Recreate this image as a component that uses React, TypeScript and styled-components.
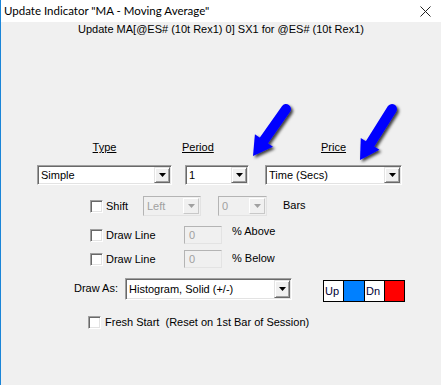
import React from 'react';
import styled, { createGlobalStyle } from 'styled-components';

const GlobalStyle = createGlobalStyle`
  html, body {
    margin: 0;
    padding: 0;
    background: #f0f0f0;
  }
  body {
    font-family: 'Liberation Sans', Arial, sans-serif;
  }
`;

const Window = styled.div`
  position: relative;
  width: 441px;
  height: 385px;
  box-sizing: border-box;
  border-left: 1px solid #1a85d8;
  background: #f0f0f0;
  display: flex;
  flex-direction: column;
  font-family: 'Liberation Sans', Arial, sans-serif;
  font-size: 11px;
  color: #000;
  overflow: hidden;
`;

const TitleBar = styled.div`
  flex: none;
  height: 22px;
  background: #fff;
  display: flex;
  align-items: center;
  justify-content: space-between;
  padding: 0 10px 0 3px;
`;

const Title = styled.span`
  font-family: Lato, 'Noto Sans', sans-serif;
  font-size: 11.5px;
  line-height: 16px;
  margin-top: -1px;
`;

const Body = styled.div`
  flex: 1;
  display: flex;
  flex-direction: column;
`;

const Subtitle = styled.div`
  margin-top: 1px;
  text-align: center;
  line-height: 13px;
`;

const FieldRow = styled.div`
  display: flex;
  align-items: flex-start;
  margin: 105px 0 0 36px;
`;

const Field = styled.div<{ $w: number; $ml?: number }>`
  width: ${(p) => p.$w}px;
  margin-left: ${(p) => p.$ml ?? 0}px;
  display: flex;
  flex-direction: column;
  gap: 11px;
`;

const FieldLabel = styled.span<{ $align?: string; $dx?: number }>`
  align-self: ${(p) => p.$align ?? 'center'};
  margin-left: ${(p) => p.$dx ?? 0}px;
  line-height: 13px;
  text-decoration: underline;
`;

const ComboBox = styled.div<{ $w: number; $h: number; $ml: number; $disabled?: boolean }>`
  width: ${(p) => p.$w}px;
  height: ${(p) => p.$h}px;
  margin-left: ${(p) => p.$ml}px;
  flex: none;
  box-sizing: border-box;
  display: flex;
  align-items: stretch;
  padding: 1px;
  background: ${(p) => (p.$disabled ? '#f0f0f0' : '#fff')};
  border: 1px solid;
  border-color: ${(p) =>
    p.$disabled ? '#b4b4b4 #e3e3e3 #e3e3e3 #b4b4b4' : '#a0a0a0 #fff #fff #a0a0a0'};
  box-shadow: ${(p) =>
    p.$disabled ? 'none' : 'inset 1px 1px 0 #696969, inset -1px -1px 0 #e3e3e3'};
`;

const ComboText = styled.span<{ $disabled?: boolean }>`
  flex: 1;
  display: flex;
  align-items: center;
  padding-left: 2px;
  white-space: nowrap;
  overflow: hidden;
  color: ${(p) => (p.$disabled ? '#a0a0a0' : '#000')};
`;

const DropButton = styled.span<{ $disabled?: boolean }>`
  width: 16px;
  flex: none;
  box-sizing: border-box;
  display: flex;
  align-items: center;
  justify-content: center;
  background: #f0f0f0;
  border: 1px solid;
  border-color: ${(p) =>
    p.$disabled ? '#fff #c8c8c8 #c8c8c8 #fff' : '#e3e3e3 #696969 #696969 #e3e3e3'};
  box-shadow: ${(p) =>
    p.$disabled ? 'none' : 'inset 1px 1px 0 #fff, inset -1px -1px 0 #a0a0a0'};
`;

const OptionRow = styled.div<{ $top: number; $left: number; $h: number; $align?: string }>`
  display: flex;
  align-items: ${(p) => p.$align ?? 'center'};
  height: ${(p) => p.$h}px;
  margin: ${(p) => p.$top}px 0 0 ${(p) => p.$left}px;
`;

const CheckBox = styled.span`
  width: 13px;
  height: 13px;
  flex: none;
  box-sizing: border-box;
  background: #fff;
  border: 1px solid;
  border-color: #a0a0a0 #fff #fff #a0a0a0;
  box-shadow: inset 1px 1px 0 #696969, inset -1px -1px 0 #e3e3e3;
`;

const OptionLabel = styled.span<{ $w?: number; $ml?: number; $dy?: number }>`
  width: ${(p) => (p.$w ? `${p.$w}px` : 'auto')};
  flex: none;
  margin-left: ${(p) => p.$ml ?? 3}px;
  margin-top: ${(p) => p.$dy ?? 0}px;
  line-height: 13px;
  white-space: pre;
`;

const NumberBox = styled.span`
  width: 38px;
  height: 18px;
  flex: none;
  box-sizing: border-box;
  display: flex;
  align-items: center;
  padding-left: 4px;
  background: #f0f0f0;
  border: 1px solid;
  border-color: #b4b4b4 #e3e3e3 #e3e3e3 #b4b4b4;
  color: #a0a0a0;
`;

const ColorKey = styled.div`
  display: flex;
  height: 22px;
  box-sizing: border-box;
  margin: 2px 0 0 31px;
  border: 1px solid #000;
`;

const KeyCell = styled.span<{ $bg: string; $w: number }>`
  width: ${(p) => p.$w}px;
  background: ${(p) => p.$bg};
  color: #000033;
  line-height: 20px;
  padding-left: 1px;
  box-sizing: border-box;
  & + & {
    border-left: 1px solid #000;
  }
`;

const Overlay = styled.svg`
  position: absolute;
  left: -1px;
  top: 0;
  pointer-events: none;
`;

type ComboProps = {
  width: number;
  height?: number;
  offset?: number;
  value: string;
  disabled?: boolean;
};

const Combo: React.FC<ComboProps> = ({ width, height = 20, offset = 0, value, disabled }) => (
  <ComboBox $w={width} $h={height} $ml={offset} $disabled={disabled}>
    <ComboText $disabled={disabled}>{value}</ComboText>
    <DropButton $disabled={disabled}>
      <svg width="7" height="4" viewBox="0 0 7 4">
        <polygon points="0,0 7,0 3.5,4" fill={disabled ? '#a0a0a0' : '#000'} />
      </svg>
    </DropButton>
  </ComboBox>
);

const Arrow: React.FC<{ from: [number, number]; to: [number, number] }> = ({ from, to }) => {
  const dx = to[0] - from[0];
  const dy = to[1] - from[1];
  const len = Math.hypot(dx, dy);
  const ux = dx / len;
  const uy = dy / len;
  const bx = to[0] - ux * 19;
  const by = to[1] - uy * 19;
  const nx = -uy * 11;
  const ny = ux * 11;
  return (
    <g filter="url(#arrowShadow)">
      <line
        x1={from[0]}
        y1={from[1]}
        x2={bx + ux * 3}
        y2={by + uy * 3}
        stroke="#0000ff"
        strokeWidth={10}
        strokeLinecap="round"
      />
      <polygon
        points={`${to[0]},${to[1]} ${bx + nx},${by + ny} ${bx - nx},${by - ny}`}
        fill="#0000ff"
      />
    </g>
  );
};

export default function App() {
  return (
    <>
      <GlobalStyle />
      <Window>
        <TitleBar>
          <Title>Update Indicator "MA - Moving Average"</Title>
          <svg width="11" height="11" viewBox="0 0 11 11">
            <path d="M0.5 0.5 L10.5 10.5 M10.5 0.5 L0.5 10.5" stroke="#222" strokeWidth="1" />
          </svg>
        </TitleBar>
        <Body>
          <Subtitle>Update MA[@ES# (10t Rex1) 0] SX1 for @ES# (10t Rex1)</Subtitle>

          <FieldRow>
            <Field $w={135}>
              <FieldLabel>Type</FieldLabel>
              <Combo width={135} value="Simple" />
            </Field>
            <Field $w={64} $ml={13}>
              <FieldLabel $align="flex-start" $dx={-3}>
                Period
              </FieldLabel>
              <Combo width={64} value="1" />
            </Field>
            <Field $w={137} $ml={16}>
              <FieldLabel>Price</FieldLabel>
              <Combo width={137} value="Time (Secs)" />
            </Field>
          </FieldRow>

          <OptionRow $top={11} $left={89} $h={20}>
            <CheckBox />
            <OptionLabel $w={37}>Shift</OptionLabel>
            <Combo width={58} value="Left" disabled />
            <Combo width={49} offset={17} value="0" disabled />
            <OptionLabel $ml={16} $dy={-2}>
              Bars
            </OptionLabel>
          </OptionRow>

          <OptionRow $top={10} $left={89} $h={18}>
            <CheckBox />
            <OptionLabel $w={78}>Draw Line</OptionLabel>
            <NumberBox>0</NumberBox>
            <OptionLabel $ml={10} $dy={-8}>
              % Above
            </OptionLabel>
          </OptionRow>

          <OptionRow $top={6} $left={89} $h={18}>
            <CheckBox />
            <OptionLabel $w={78}>Draw Line</OptionLabel>
            <NumberBox>0</NumberBox>
            <OptionLabel $ml={10} $dy={-2}>
              % Below
            </OptionLabel>
          </OptionRow>

          <OptionRow $top={10} $left={73} $h={22} $align="flex-start">
            <OptionLabel $w={51} $ml={0} $dy={4}>
              Draw As:
            </OptionLabel>
            <Combo width={167} height={22} value="Histogram, Solid (+/-)" />
            <ColorKey>
              <KeyCell $bg="#fff" $w={19}>
                Up
              </KeyCell>
              <KeyCell $bg="#0080ff" $w={21} />
              <KeyCell $bg="#fff" $w={20}>
                Dn
              </KeyCell>
              <KeyCell $bg="#ff0000" $w={20} />
            </ColorKey>
          </OptionRow>

          <OptionRow $top={16} $left={87} $h={13}>
            <CheckBox />
            <OptionLabel $ml={4}>Fresh Start  (Reset on 1st Bar of Session)</OptionLabel>
          </OptionRow>
        </Body>

        <Overlay width="441" height="385" viewBox="0 0 441 385">
          <defs>
            <filter id="arrowShadow" x="-30%" y="-30%" width="160%" height="160%">
              <feDropShadow dx="2" dy="2" stdDeviation="1.5" floodColor="#000" floodOpacity="0.75" />
            </filter>
          </defs>
          <Arrow from={[286, 109]} to={[253, 156]} />
          <Arrow from={[392, 109]} to={[360, 160]} />
        </Overlay>
      </Window>
    </>
  );
}
